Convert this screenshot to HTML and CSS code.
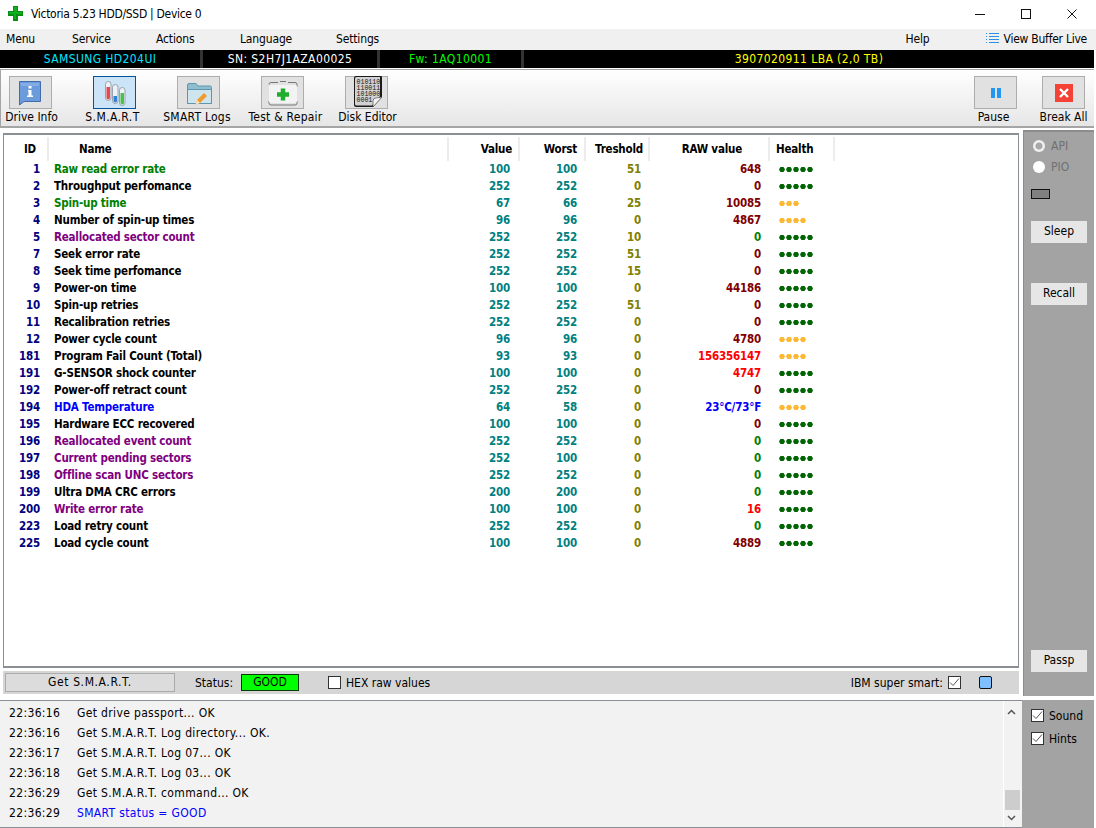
FILE: index.html
```html
<!DOCTYPE html>
<html lang="en">
<head>
<meta charset="utf-8">
<title>Victoria 5.23 HDD/SSD | Device 0</title>
<link rel="stylesheet" href="styles.css">
</head>
<body>
<div class="app">
  <header class="titlebar">
    <svg class="app-icon" width="15" height="15" viewBox="0 0 15 15"><path d="M5 0h5v5h5v5h-5v5H5v-5H0V5h5z" fill="#0a8f14"/><path d="M6 1h3v5h5v2H8v5H6V8H1V6h5z" fill="#0fae1c"/></svg>
    <span class="title-text">Victoria 5.23 HDD/SSD | Device 0</span>
    <div class="win-buttons">
      <svg width="10" height="10" viewBox="0 0 10 10"><path d="M0 5.500h10" stroke="#111" fill="none"/></svg>
      <svg width="10" height="10" viewBox="0 0 10 10"><rect x=".5" y=".5" width="9" height="9" stroke="#111" fill="none"/></svg>
      <svg width="10" height="10" viewBox="0 0 10 10"><path d="M.5.5l9 9M9.500.5l-9 9" stroke="#111" fill="none"/></svg>
    </div>
  </header>

  <nav class="menubar">
    <span class="menu-item w66">Menu</span>
    <span class="menu-item w84">Service</span>
    <span class="menu-item w84">Actions</span>
    <span class="menu-item w96">Language</span>
    <span class="menu-item">Settings</span>
    <span class="menu-item help">Help</span>
    <span class="menu-item buffer">
      <svg width="13" height="13" viewBox="0 0 13 13"><path d="M0 1.500h1M3 1.500h10M0 4.500h1M3 4.500h10M0 7.500h1M3 7.500h10M0 10.500h1M3 10.500h10" stroke="#2a8fe6" fill="none"/></svg>
      View Buffer Live
    </span>
  </nav>

  <div class="infobar">
    <span class="info info-model">SAMSUNG HD204UI</span>
    <span class="info info-sn">SN: S2H7J1AZA00025</span>
    <span class="info info-fw">Fw: 1AQ10001</span>
    <span class="info info-lba">3907020911 LBA (2,0 TB)</span>
  </div>

  <div class="toolbar">
    <div class="tool">
      <div class="tool-box">
        <svg width="26" height="26" viewBox="0 0 26 26"><path d="M1.500 1.500h21v20H6l-4.500 3.500z" fill="#6b9bdb" stroke="#3f6cae"/><path d="M3 3h18v3H3z" fill="#84ade6"/><path d="M10.500 6h3v2.500h-3zM10 10h3.500v5.500H15V17H9v-1.500h1.500v-4H10z" fill="#fff"/></svg>
      </div>
      <span class="tool-label lbl-drive">Drive Info</span>
    </div>
    <div class="tool">
      <div class="tool-box selected">
        <svg width="26" height="28" viewBox="0 0 26 28"><g stroke="#9aa3ad" fill="#eef2f6"><rect x="3.500" y="2.500" width="5.500" height="19" rx="2.700"/><rect x="10.500" y="5.500" width="5.500" height="19" rx="2.700"/><rect x="17.500" y="8.500" width="5.500" height="18" rx="2.700"/></g><path d="M4.500 8h3.500v10.500q0 2-1.750 2t-1.750-2z" fill="#e8474c"/><path d="M11.500 17h3.500v4.500q0 2-1.750 2t-1.750-2z" fill="#2f80d8"/><path d="M18.500 14h3.500v9.500q0 2-1.750 2t-1.750-2z" fill="#4cc04c"/></svg>
      </div>
      <span class="tool-label dotted lbl-smart">S.M.A.R.T</span>
    </div>
    <div class="tool">
      <div class="tool-box">
        <svg width="28" height="26" viewBox="0 0 28 26"><path d="M2.500 23.500V5q0-1.500 1.500-1.500h7l2 2.500h12q1.500 0 1.500 1.500v16z" fill="#8fbdd0" stroke="#5d97ad"/><path d="M2.500 23.500V9.500h24v14z" fill="#cfe5ee" stroke="#5d97ad"/><path d="M10.500 24.500l1.500-4.500 7-7 3 3-7 7z" fill="#f29a2e"/><path d="M10.500 24.500l1.500-4.500 3 3z" fill="#fbe3bf"/></svg>
      </div>
      <span class="tool-label wide lbl-logs">SMART Logs</span>
    </div>
    <div class="tool">
      <div class="tool-box">
        <svg width="32" height="28" viewBox="0 0 32 28"><path d="M2 5.500q0-2 2-2h7M21 3.500h7q2 0 2 2v2M2 22v2q0 2 2 2h24q2 0 2-2v-2M13 2.500h6" stroke="#777" fill="none"/><rect x="2" y="6" width="28" height="18" rx="2" fill="#f2f3f2"/><path d="M13 8h6v5h5v6h-5v5h-6v-5H8v-6h5z" fill="#1fae2c" transform="translate(4 3.500) scale(.75)"/></svg>
      </div>
      <span class="tool-label wide lbl-test">Test &amp; Repair</span>
    </div>
    <div class="tool">
      <div class="tool-box box-disk">
        <svg width="29" height="32" viewBox="0 0 29 32"><path d="M0 2q0-2 2-2h25q1 0 1 1v20l-9 10H2q-2 0-2-2z" fill="#1b1b1b"/><path d="M1 2.500Q1 1 2.500 1H26v19l-8 9.500H2.500Q1 29.500 1 28z" fill="#d2d2d2"/><path d="M28 21l-9 10v-6q0-3 3-3z" fill="#f4f4f4" stroke="#555" stroke-width=".7"/><text class="binary"><tspan x="2.500" y="8">010110</tspan><tspan x="2.500" y="14">110011</tspan><tspan x="2.500" y="20">101000</tspan><tspan x="2.500" y="26">0001</tspan></text></svg>
      </div>
      <span class="tool-label lbl-disk">Disk Editor</span>
    </div>
    <div class="tool tool-right">
      <div class="tool-box">
        <svg width="10" height="10" viewBox="0 0 10 10"><path d="M0 0h4v10H0zM6 0h4v10H6z" fill="#2196f3"/></svg>
      </div>
      <span class="tool-label lbl-pause">Pause</span>
    </div>
    <div class="tool">
      <div class="tool-box">
        <svg width="18" height="18" viewBox="0 0 18 18"><rect width="18" height="18" fill="#f44336"/><path d="M5 5l8 8M13 5l-8 8" stroke="#fff" stroke-width="2.400" fill="none"/></svg>
      </div>
      <span class="tool-label">Break All</span>
    </div>
  </div>

  <div class="workspace">
    <div class="left-col">
      <main class="table-box">
        <table class="smart">
          <colgroup><col class="c-id"><col class="c-name"><col class="c-val"><col class="c-wor"><col class="c-tre"><col class="c-raw"><col class="c-hea"><col></colgroup>
          <thead>
            <tr><th class="h-id">ID</th><th class="h-name">Name</th><th class="h-val">Value</th><th class="h-wor">Worst</th><th>Treshold</th><th class="h-raw">RAW value</th><th class="h-health">Health</th><th class="h-last"></th></tr>
          </thead>
          <tbody>
            <tr><td class="id">1</td><td class="nm green">Raw read error rate</td><td class="v">100</td><td class="w">100</td><td class="t">51</td><td class="r maroon">648</td><td><i class="dots dots-g"></i></td><td></td></tr>
            <tr><td class="id">2</td><td class="nm">Throughput perfomance</td><td class="v">252</td><td class="w">252</td><td class="t">0</td><td class="r maroon">0</td><td><i class="dots dots-g"></i></td><td></td></tr>
            <tr><td class="id">3</td><td class="nm green">Spin-up time</td><td class="v">67</td><td class="w">66</td><td class="t">25</td><td class="r maroon">10085</td><td><i class="dots dots-w3"></i></td><td></td></tr>
            <tr><td class="id">4</td><td class="nm">Number of spin-up times</td><td class="v">96</td><td class="w">96</td><td class="t">0</td><td class="r maroon">4867</td><td><i class="dots dots-w4"></i></td><td></td></tr>
            <tr><td class="id">5</td><td class="nm purple">Reallocated sector count</td><td class="v">252</td><td class="w">252</td><td class="t">10</td><td class="r green">0</td><td><i class="dots dots-g"></i></td><td></td></tr>
            <tr><td class="id">7</td><td class="nm">Seek error rate</td><td class="v">252</td><td class="w">252</td><td class="t">51</td><td class="r maroon">0</td><td><i class="dots dots-g"></i></td><td></td></tr>
            <tr><td class="id">8</td><td class="nm">Seek time perfomance</td><td class="v">252</td><td class="w">252</td><td class="t">15</td><td class="r maroon">0</td><td><i class="dots dots-g"></i></td><td></td></tr>
            <tr><td class="id">9</td><td class="nm">Power-on time</td><td class="v">100</td><td class="w">100</td><td class="t">0</td><td class="r maroon">44186</td><td><i class="dots dots-g"></i></td><td></td></tr>
            <tr><td class="id">10</td><td class="nm">Spin-up retries</td><td class="v">252</td><td class="w">252</td><td class="t">51</td><td class="r maroon">0</td><td><i class="dots dots-g"></i></td><td></td></tr>
            <tr><td class="id">11</td><td class="nm">Recalibration retries</td><td class="v">252</td><td class="w">252</td><td class="t">0</td><td class="r maroon">0</td><td><i class="dots dots-g"></i></td><td></td></tr>
            <tr><td class="id">12</td><td class="nm">Power cycle count</td><td class="v">96</td><td class="w">96</td><td class="t">0</td><td class="r maroon">4780</td><td><i class="dots dots-w4"></i></td><td></td></tr>
            <tr><td class="id">181</td><td class="nm">Program Fail Count (Total)</td><td class="v">93</td><td class="w">93</td><td class="t">0</td><td class="r red">156356147</td><td><i class="dots dots-w4"></i></td><td></td></tr>
            <tr><td class="id">191</td><td class="nm">G-SENSOR shock counter</td><td class="v">100</td><td class="w">100</td><td class="t">0</td><td class="r red">4747</td><td><i class="dots dots-g"></i></td><td></td></tr>
            <tr><td class="id">192</td><td class="nm">Power-off retract count</td><td class="v">252</td><td class="w">252</td><td class="t">0</td><td class="r maroon">0</td><td><i class="dots dots-g"></i></td><td></td></tr>
            <tr><td class="id">194</td><td class="nm blue">HDA Temperature</td><td class="v">64</td><td class="w">58</td><td class="t">0</td><td class="r blue">23°C/73°F</td><td><i class="dots dots-w4"></i></td><td></td></tr>
            <tr><td class="id">195</td><td class="nm">Hardware ECC recovered</td><td class="v">100</td><td class="w">100</td><td class="t">0</td><td class="r maroon">0</td><td><i class="dots dots-g"></i></td><td></td></tr>
            <tr><td class="id">196</td><td class="nm purple">Reallocated event count</td><td class="v">252</td><td class="w">252</td><td class="t">0</td><td class="r green">0</td><td><i class="dots dots-g"></i></td><td></td></tr>
            <tr><td class="id">197</td><td class="nm purple">Current pending sectors</td><td class="v">252</td><td class="w">100</td><td class="t">0</td><td class="r green">0</td><td><i class="dots dots-g"></i></td><td></td></tr>
            <tr><td class="id">198</td><td class="nm purple">Offline scan UNC sectors</td><td class="v">252</td><td class="w">252</td><td class="t">0</td><td class="r green">0</td><td><i class="dots dots-g"></i></td><td></td></tr>
            <tr><td class="id">199</td><td class="nm">Ultra DMA CRC errors</td><td class="v">200</td><td class="w">200</td><td class="t">0</td><td class="r green">0</td><td><i class="dots dots-g"></i></td><td></td></tr>
            <tr><td class="id">200</td><td class="nm purple">Write error rate</td><td class="v">100</td><td class="w">100</td><td class="t">0</td><td class="r red">16</td><td><i class="dots dots-g"></i></td><td></td></tr>
            <tr><td class="id">223</td><td class="nm">Load retry count</td><td class="v">252</td><td class="w">252</td><td class="t">0</td><td class="r green">0</td><td><i class="dots dots-g"></i></td><td></td></tr>
            <tr><td class="id">225</td><td class="nm">Load cycle count</td><td class="v">100</td><td class="w">100</td><td class="t">0</td><td class="r maroon">4889</td><td><i class="dots dots-g"></i></td><td></td></tr>
          </tbody>
        </table>
      </main>
      <div class="statusbar">
        <div class="get-btn">Get S.M.A.R.T.</div>
        <span class="status-label">Status:</span>
        <span class="good">GOOD</span>
        <span class="check hex-check"></span>
        <span class="hex-label">HEX raw values</span>
        <span class="ibm-label">IBM super smart:</span>
        <span class="check checked"><svg width="11" height="11" viewBox="0 0 11 11"><path d="M1 5.500l3 3 6-7" stroke="#555" fill="none"/></svg></span>
        <span class="blue-square"></span>
      </div>
    </div>
    <aside class="side-top">
      <label class="radio-row"><span class="radio dot-on"></span>API</label>
      <label class="radio-row"><span class="radio"></span>PIO</label>
      <div class="indicator"></div>
      <div class="side-btn sleep">Sleep</div>
      <div class="side-btn recall">Recall</div>
      <div class="side-btn passp">Passp</div>
    </aside>
  </div>

  <div class="bottom">
    <section class="log">
      <div class="log-lines">
        <div class="log-line"><span class="time">22:36:16</span>Get drive passport... OK</div>
        <div class="log-line"><span class="time">22:36:16</span>Get S.M.A.R.T. Log directory... OK.</div>
        <div class="log-line"><span class="time">22:36:17</span>Get S.M.A.R.T. Log 07... OK</div>
        <div class="log-line"><span class="time">22:36:18</span>Get S.M.A.R.T. Log 03... OK</div>
        <div class="log-line"><span class="time">22:36:29</span>Get S.M.A.R.T. command... OK</div>
        <div class="log-line"><span class="time">22:36:29</span><span class="log-blue">SMART status = GOOD</span></div>
      </div>
      <div class="scrollbar">
        <svg width="9" height="6" viewBox="0 0 9 6"><path d="M1 5l3.500-3.500L8 5" stroke="#555" stroke-width="1.500" fill="none"/></svg>
        <div class="thumb"></div>
        <svg width="9" height="6" viewBox="0 0 9 6"><path d="M1 1l3.500 3.500L8 1" stroke="#555" stroke-width="1.500" fill="none"/></svg>
      </div>
    </section>
    <aside class="side-bottom">
      <div class="side-check"><span class="check checked"><svg width="11" height="11" viewBox="0 0 11 11"><path d="M1 5.500l3 3 6-7" stroke="#555" fill="none"/></svg></span>Sound</div>
      <div class="side-check"><span class="check checked"><svg width="11" height="11" viewBox="0 0 11 11"><path d="M1 5.500l3 3 6-7" stroke="#555" fill="none"/></svg></span>Hints</div>
    </aside>
  </div>
</div>
</body>
</html>
```
FILE: styles.css
```css
* { box-sizing: border-box; }
html, body { margin: 0; padding: 0; }
body {
  width: 1096px;
  height: 828px;
  overflow: hidden;
  background: #fff;
  color: #000;
  font-family: "DejaVu Sans Condensed", "DejaVu Sans", sans-serif;
  font-stretch: condensed;
  font-size: 12px;
}
.app { display: flex; flex-direction: column; height: 828px; }

.titlebar { height: 29px; display: flex; align-items: center; padding: 0 19px 2px 8px; background: #fff; flex: none; }
.title-text { margin-left: 8px; letter-spacing: -.3px; }
.win-buttons { margin-left: auto; display: flex; gap: 36px; }
.win-buttons svg { display: block; }

.menubar { height: 21px; display: flex; align-items: center; background: #f0f0f0; padding: 0 9px 2px 6px; flex: none; letter-spacing: -.15px; }
.menu-item { white-space: nowrap; }
.w66 { width: 66px; }
.w84 { width: 84px; }
.w96 { width: 96px; }
.help { margin-left: auto; margin-right: 56px; }
.buffer { display: flex; align-items: center; gap: 5px; letter-spacing: -.25px; }

.infobar { height: 18px; display: flex; align-items: center; background: #000; margin-right: 2px; flex: none; letter-spacing: .4px; }
.info { height: 18px; line-height: 18px; text-align: center; border-right: 3px solid #333; flex: none; }
.info-model { width: 203px; color: #00e6ff; }
.info-sn { width: 177px; color: #fff; }
.info-fw { width: 144px; color: #00ff00; }
.info-lba { flex: 1; color: #ffff00; border-right: 0; padding-left: 0; }

.toolbar {
  height: 59px; margin: 1px 2px 0 0; display: flex; flex: none;
  padding: 6px 9px 0 8px; gap: 41px;
  background: linear-gradient(#fff, #e6e6e6);
  border-top: 1px solid #a5a5a5; border-bottom: 2px solid #a5a5a5; border-left: 1px solid #a5a5a5;
}
.tool { width: 43px; display: flex; flex-direction: column; align-items: center; }
.tool-right { margin-left: auto; }
.tool-right + .tool { margin-left: -16px; }
.tool-box { width: 43px; height: 33px; flex: none; display: flex; align-items: center; justify-content: center; background: #e1e1e1; border: 1px solid #adadad; overflow: hidden; }
.tool-box.selected { background: #cce4f7; border-color: #005499; }
.box-disk { align-items: flex-end; padding-left: 3px; overflow: visible; }
.tool-label { line-height: 16px; white-space: nowrap; }
.tool-label.dotted { letter-spacing: .4px; }
.tool-label.wide { letter-spacing: .25px; }
.lbl-drive { margin-left: 2px; }
.lbl-smart { margin-right: 4px; }
.lbl-logs { margin-right: 3px; }
.lbl-test { margin-left: 6px; }
.lbl-disk { margin-left: 2px; }
.lbl-pause { margin-right: 4px; }
.binary { font-family: "Liberation Mono", monospace; font-size: 6.600px; fill: #111; }

.workspace { display: flex; flex: 1; min-height: 0; padding-left: 3px; padding-top: 2px; }
.left-col { width: 1016px; display: flex; flex-direction: column; padding-top: 3px; }
.table-box { height: 535px; background: #fff; border: 1px solid #8a8f96; border-width: 2px 1px; padding-top: 2px; flex: none; overflow: hidden; }
.smart { border-collapse: collapse; table-layout: fixed; width: 100%; font-weight: 700; font-size: 11.500px; letter-spacing: -.2px; }
.c-id { width: 44px; }
.c-name { width: 400px; }
.c-val { width: 71px; }
.c-wor { width: 66px; }
.c-tre { width: 64px; }
.c-raw { width: 120px; }
.c-hea { width: 65px; }
.smart th { height: 24px; padding: 0 5px 1px 0; text-align: right; border-right: 2px solid #ececec; font-weight: 700; }
.smart .h-id { text-align: right; padding-right: 11px; }
.smart .h-name { text-align: left; padding-left: 30px; }
.smart .h-val { padding-right: 6px; }
.smart .h-wor { padding-right: 7px; }
.smart .h-raw { padding-right: 26px; }
.smart .h-health { text-align: left; padding-left: 6px; }
.smart .h-last { border-right: 0; }
.smart td { height: 17px; padding: 0 8px 0 0; text-align: right; line-height: 17px; white-space: nowrap; }
.smart td.id { color: #000080; }
.smart td.nm { text-align: left; padding-left: 6px; }
.smart td.v { color: #008080; padding-right: 9px; }
.smart td.w { color: #008080; }
.smart td.t { color: #808000; }
.smart td.green { color: #008000; }
.smart td.purple { color: #800080; }
.smart td.blue { color: #0000ff; }
.smart td.maroon { color: #800000; }
.smart td.red { color: #ff0000; }
.dots { display: block; height: 7px; margin-left: 10px; background-size: 7px 7px; background-repeat: repeat-x; }
.dots-g { width: 35px; background-image: radial-gradient(circle at 3px 3.500px, #006400 2.400px, transparent 3px); }
.dots-w3 { width: 21px; background-image: radial-gradient(circle at 3px 3.500px, #ffb833 2.400px, transparent 3px); }
.dots-w4 { width: 28px; background-image: radial-gradient(circle at 3px 3.500px, #ffb833 2.400px, transparent 3px); }

.statusbar { height: 23px; margin-top: 3px; background: #d6d6d6; display: flex; align-items: center; padding-left: 2px; flex: none; }
.get-btn { width: 170px; height: 19px; line-height: 17px; text-align: center; background: #dcdcdc; border: 1px solid #aaa; letter-spacing: .6px; }
.status-label { margin-left: 20px; width: 46px; }
.good { width: 58px; height: 17px; line-height: 15px; text-align: center; background: #00ff00; border: 1px solid #0a3a0a; }
.check { width: 13px; height: 13px; background: #fff; border: 1px solid #333; display: inline-flex; align-items: center; justify-content: center; flex: none; }
.hex-check { margin-left: 29px; }
.hex-label { margin-left: 5px; }
.ibm-label { margin-left: auto; }
.statusbar .checked { margin-left: 5px; }
.blue-square { width: 13px; height: 13px; margin: 0 27px 0 18px; background: #80bfff; border: 1px solid #111; border-radius: 2px; }

.side-top { width: 71px; margin-left: 4px; background: #a3a3a3; border-left: 1px solid #8c8c8c; border-top: 2px solid #8c8c8c; display: flex; flex-direction: column; padding: 6px 0 0 7px; height: 566px; }
.radio-row { display: flex; align-items: center; gap: 6px; height: 16px; margin-bottom: 5px; color: #707070; padding-left: 2px; }
.radio { width: 12px; height: 12px; border-radius: 50%; background: #fff; display: block; }
.radio.dot-on { background: radial-gradient(circle, #a8a8a8 3px, #f0f0f0 4px); }
.indicator { width: 19px; height: 10px; background: #808080; border: 1px solid #111; margin-top: 9px; }
.side-btn { width: 56px; height: 22px; line-height: 21px; text-align: center; background: #e6e6e6; }
.sleep { margin-top: 22px; }
.recall { margin-top: 40px; }
.passp { margin-top: 345px; }

.bottom { height: 128px; display: flex; flex: none; }
.log { width: 1022px; background: #f2f2f2; border-top: 1px solid #8a8f96; border-bottom: 1px solid #8a8f96; display: flex; letter-spacing: .35px; }
.log-lines { flex: 1; padding: 2px 0 0 9px; }
.log-line { height: 20px; line-height: 20px; white-space: nowrap; }
.time { display: inline-block; width: 68px; }
.log-blue { color: #0000ff; }
.scrollbar { width: 18px; margin-right: 1px; background: #f2f2f2; border-left: 1px solid #fff; display: flex; flex-direction: column; align-items: center; padding: 8px 3px 6px 0; }
.scrollbar svg { flex: none; }
.thumb { width: 15px; height: 20px; background: #cdcdcd; margin-top: auto; margin-bottom: 5px; margin-left: 2px; }
.side-bottom { width: 72px; background: #a3a3a3; padding: 4px 0 0 9px; margin-right: 2px; }
.side-check { display: flex; align-items: center; gap: 5px; height: 23px; }
```
